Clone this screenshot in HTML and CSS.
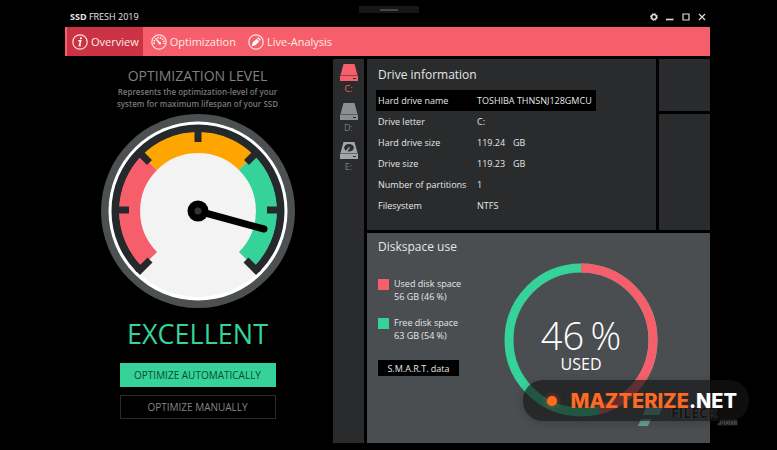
FILE: index.html
```html
<!DOCTYPE html>
<html lang="en">
<head>
    <meta charset="UTF-8">
    <meta name="viewport" content="width=device-width, initial-scale=1.0">
    <title>SSD Fresh 2019</title>
    <link rel="stylesheet" href="styles.css">
</head>
<body>
    <div class="handle"></div>
    <div class="app">
        <header class="titlebar">
            <h1 class="app-name"><b>SSD</b> FRESH 2019</h1>
            <div class="window-buttons">
                <button type="button" aria-label="Settings">
                    <svg width="8" height="8" viewBox="0 0 8 8"><circle cx="4" cy="4" r="2.5" fill="none" stroke="#ddd" stroke-width="1.7"/><circle cx="4" cy="4" r="3.4" fill="none" stroke="#ddd" stroke-width="1" stroke-dasharray="1.37 1.3"/></svg>
                </button>
                <button type="button" aria-label="Minimize">
                    <svg width="8" height="8" viewBox="0 0 8 8"><path d="M0 6.5h7.5" stroke="#ddd" stroke-width="1.6"/></svg>
                </button>
                <button type="button" aria-label="Maximize">
                    <svg width="8" height="8" viewBox="0 0 8 8"><path d="M1 1h6v6h-6z" fill="none" stroke="#ddd" stroke-width="1.2"/></svg>
                </button>
                <button type="button" aria-label="Close">
                    <svg width="8" height="8" viewBox="0 0 8 8"><path d="M1 1l6 6M7 1L1 7" stroke="#ddd" stroke-width="1.2"/></svg>
                </button>
            </div>
        </header>

        <nav class="tabs">
            <a href="#" class="tab active">
                <svg width="16" height="16" viewBox="0 0 16 16"><circle cx="8" cy="8" r="7.2" fill="none" stroke="#ffe3dd" stroke-width="1.2"/><circle cx="8.9" cy="4.3" r="1.1" fill="#fff"/><path d="M6.3 6.8h2.4L7.4 11.6h1.5" fill="none" stroke="#fff" stroke-width="1.5"/></svg>
                Overview
            </a>
            <a href="#" class="tab">
                <svg width="16" height="16" viewBox="0 0 16 16"><circle cx="8" cy="8" r="7.2" fill="none" stroke="#ffe3dd" stroke-width="1.2"/><path d="M3.2 10A5 5 0 1 1 12.8 10" fill="none" stroke="#ffe3dd" stroke-width="1.8" stroke-dasharray="1.6 .9"/><path d="M5.5 5.5L9 9.5" stroke="#fff" stroke-width="1.4"/><circle cx="8.8" cy="9.2" r="1.2" fill="#fff"/></svg>
                Optimization
            </a>
            <a href="#" class="tab">
                <svg width="16" height="16" viewBox="0 0 16 16"><circle cx="8" cy="8" r="7.2" fill="none" stroke="#ffe3dd" stroke-width="1.2"/><path d="M3.8 12.2l.9-3.6 3.9-3.9 2.7 2.7-3.9 3.9zM9.2 4.1l1-1 2.7 2.7-1 1z" fill="#fff"/></svg>
                Live-Analysis
            </a>
        </nav>

        <main class="content">
            <section class="level">
                <h2 class="level-title">OPTIMIZATION LEVEL</h2>
                <p class="level-text">Represents the optimization-level of your<br>system for maximum lifespan of your SSD</p>
                <svg class="gauge" width="194" height="194" viewBox="-97 -97 194 194">
                    <circle r="97" fill="#4d5051"/>
                    <circle r="89.500" fill="#fff"/>
                    <circle r="86" fill="#f3f3f3"/>
                    <g fill="none">
                        <path d="M-58.3 58.3A82.5 82.5 0 1 1 58.3 58.3" stroke="#26292b" stroke-width="8"/>
                        <path d="M-48.4 48.4A68.5 68.5 0 0 1 -48.4 -48.4" stroke="#f65e6b" stroke-width="21"/>
                        <path d="M-48.4 -48.4A68.5 68.5 0 0 1 48.4 -48.4" stroke="#ffa500" stroke-width="21"/>
                        <path d="M48.4 -48.4A68.5 68.5 0 0 1 48.4 48.4" stroke="#35d399" stroke-width="21"/>
                        <path d="M-85 -1h16M85 -1h-16M0 -85v16M-60 -60l11.5 11.5M60 -60l-11.5 11.5M-60.5 61.500l12.500 -12.500M60.500 61.500l-12.500 -12.500" stroke="#26292b" stroke-width="7"/>
                    </g>
                    <path d="M0 0L66 18" stroke="#000" stroke-width="7" stroke-linecap="round"/>
                    <circle r="10.5"/>
                    <circle r="3.5" fill="#333"/>
                </svg>
                <p class="level-result">EXCELLENT</p>
                <button type="button" class="action primary">OPTIMIZE AUTOMATICALLY</button>
                <button type="button" class="action">OPTIMIZE MANUALLY</button>
            </section>

            <aside class="drives">
                <button type="button" class="drive selected">
                    <svg width="18" height="17" viewBox="0 0 18 17"><path d="M3.5 0h11L17.5 11H.5zM0 11.500h18v5.500H0z" fill="currentColor"/><path d="M13 14.5h3" stroke="#292b2c"/></svg>
                    C:
                </button>
                <button type="button" class="drive">
                    <svg width="18" height="17" viewBox="0 0 18 17"><path d="M3.5 0h11L17.5 11H.5zM0 11.500h18v5.500H0z" fill="#8c8f90"/><path d="M13 14.5h3" stroke="#292b2c"/></svg>
                    D:
                </button>
                <button type="button" class="drive">
                    <svg width="18" height="17" viewBox="0 0 18 17"><path d="M3.5 0h11L17.5 11H.5zM0 11.500h18v5.500H0z" fill="#a3a6a7"/><ellipse cx="9" cy="5.8" rx="4.8" ry="3.8" fill="#292b2c"/><path d="M9 6L6 10" stroke="#a3a6a7" stroke-width="1.6"/><circle cx="9.3" cy="5.5" r="1" fill="#6d7071"/><path d="M13 14.5h3" stroke="#292b2c"/></svg>
                    E:
                </button>
            </aside>

            <div class="panels">
                <div class="panels-top">
                    <section class="panel info">
                        <h2 class="panel-title">Drive information</h2>
                        <table class="info-table">
                            <tr class="highlight"><th scope="row">Hard drive name</th><td colspan="2">TOSHIBA THNSNJ128GMCU</td></tr>
                            <tr><th scope="row">Drive letter</th><td colspan="2">C:</td></tr>
                            <tr><th scope="row">Hard drive size</th><td class="amount">119.24</td><td>GB</td></tr>
                            <tr><th scope="row">Drive size</th><td class="amount">119.23</td><td>GB</td></tr>
                            <tr><th scope="row">Number of partitions</th><td colspan="2">1</td></tr>
                            <tr><th scope="row">Filesystem</th><td colspan="2">NTFS</td></tr>
                        </table>
                    </section>
                    <div class="side">
                        <div class="panel side-small"></div>
                        <div class="panel side-large"></div>
                    </div>
                </div>
                <section class="panel usage">
                    <div class="usage-info">
                        <h2 class="panel-title">Diskspace use</h2>
                        <ul class="legend">
                            <li><span class="swatch used"></span><span>Used disk space<br>56 GB (46 %)</span></li>
                            <li><span class="swatch free"></span><span>Free disk space<br>63 GB (54 %)</span></li>
                        </ul>
                        <button type="button" class="smart">S.M.A.R.T. data</button>
                    </div>
                    <div class="donut">
                        <svg width="154" height="154" viewBox="-77 -77 154 154">
                            <g fill="none" stroke-width="9" transform="rotate(-90)">
                                <circle r="72" stroke="#35d399"/>
                                <circle r="72" stroke="#f65e6b" pathLength="100" stroke-dasharray="46 54"/>
                            </g>
                        </svg>
                        <div class="donut-label">
                            <span class="percent">46&thinsp;%</span>
                            <span class="caption">USED</span>
                        </div>
                    </div>
                </section>
            </div>
        </main>
    </div>

    <div class="source-mark">
        <svg width="26" height="20" viewBox="0 0 26 20"><path d="M8 0h17l-4 8H5z" fill="#5fae9a"/><path d="M3 12h10l-3 7H0z" fill="#6ba391"/></svg>
        <span class="source-name">FILECR<small>.com</small></span>
    </div>
    <div class="badge">
        <span class="badge-dot"></span>
        <span class="badge-text"><b>MAZTERIZE</b>.NET</span>
    </div>
</body>
</html>
```
FILE: styles.css
```css
* {
    box-sizing: border-box;
}
body {
    margin: 0;
    padding: 0 67px 7px 65px;
    background-color: #000;
    color: #e6e6e6;
    font-family: "Open Sans", "Noto Sans", sans-serif;
    font-size: 10px;
    min-height: 100vh;
    display: flex;
}
h1, h2, p, ul {
    margin: 0;
    padding: 0;
    font-weight: normal;
}
button {
    font-family: inherit;
    color: inherit;
    background: none;
    border: none;
    padding: 0;
    cursor: pointer;
}
svg {
    display: block;
    flex: none;
}
.app {
    flex: 1;
    display: flex;
    flex-direction: column;
}

/* title bar */
.handle {
    position: absolute;
    top: 6px;
    left: 50%;
    width: 60px;
    height: 7px;
    margin-left: -30px;
    background-color: #171717;
}
.handle::after {
    content: "";
    display: block;
    width: 18px;
    height: 2px;
    margin: 3px auto 0;
    background-color: #454545;
}
.titlebar {
    display: flex;
    justify-content: space-between;
    align-items: center;
    height: 27px;
    padding: 6px 4px 0 5px;
}
.app-name {
    font-size: 9px;
}
.window-buttons {
    display: flex;
    gap: 8px;
}

/* tabs */
.tabs {
    display: flex;
    gap: 3px;
    height: 29px;
    padding-left: 2px;
    background-color: #f65e6b;
}
.tab {
    display: flex;
    align-items: center;
    gap: 3px;
    padding: 0 4px 0 5px;
    color: #ffece8;
    font-size: 11px;
    text-decoration: none;
}
.tab.active {
    background-color: #cb3243;
}

.content {
    flex: 1;
    display: flex;
    gap: 3px;
}

/* optimization level */
.level {
    flex: 0 0 265px;
    display: flex;
    flex-direction: column;
    align-items: center;
    padding-top: 10px;
}
.level-title {
    color: #808080;
    font-size: 14px;
    line-height: 20px;
}
.level-text {
    color: #777;
    font-size: 8px;
    font-weight: 600;
    line-height: 12px;
    text-align: center;
}
.gauge {
    margin-top: 4px;
}
.level-result {
    margin: 6px 0 10px;
    color: #35d399;
    font-size: 27px;
    line-height: 39px;
}
.action {
    width: 156px;
    height: 24px;
    margin-bottom: 8px;
    border: 1px solid #2c2c2c;
    color: #858585;
    font-size: 10px;
}
.action.primary {
    background-color: #35d399;
    border-color: #35d399;
    color: #0c4a35;
}

/* drive list */
.drives {
    flex: 0 0 31px;
    display: flex;
    flex-direction: column;
    align-items: center;
    gap: 7px;
    margin-top: 3px;
    padding-top: 5px;
    background-color: #292b2c;
}
.drive {
    display: flex;
    flex-direction: column;
    align-items: center;
    gap: 1px;
    color: #7b7e7f;
    font-size: 9px;
    line-height: 14px;
}
.drive.selected {
    color: #f65e6b;
}

/* panels */
.panels {
    flex: 1;
    display: flex;
    flex-direction: column;
    gap: 3px;
    margin-top: 3px;
}
.panels-top {
    display: flex;
    gap: 3px;
}
.panel {
    background-color: #292b2c;
}
.panel-title {
    font-size: 12px;
    line-height: 16px;
}
.info {
    flex: 1;
    padding: 8px 9px 14px;
}
.info .panel-title {
    padding: 0 2px;
}
.info-table {
    margin-top: 7px;
    border-collapse: collapse;
    font-size: 9px;
}
.info-table th,
.info-table td {
    height: 21px;
    padding: 0 4px 0 0;
    font-weight: normal;
    text-align: left;
}
.info-table th {
    width: 101px;
    padding: 0 0 0 2px;
}
.info-table .amount {
    width: 36px;
}
.highlight {
    background-color: #000;
}
.side {
    flex: 0 0 51px;
    display: flex;
    flex-direction: column;
    gap: 3px;
}
.side-small {
    height: 52px;
}
.side-large {
    flex: 1;
}
.usage {
    flex: 1;
    display: flex;
    align-items: flex-start;
    gap: 43px;
    padding: 6px 11px 0;
    background-color: #4b4e50;
}
.usage-info {
    flex: 0 0 82px;
    white-space: nowrap;
}
.legend {
    display: flex;
    flex-direction: column;
    gap: 13px;
    margin: 22px 0 18px;
    list-style: none;
    font-size: 9px;
    line-height: 13px;
}
.legend li {
    display: flex;
    gap: 5px;
}
.swatch {
    flex: none;
    width: 11px;
    height: 11px;
    margin-top: 2px;
}
.used {
    background-color: #f65e6b;
}
.free {
    background-color: #35d399;
}
.smart {
    width: 81px;
    height: 16px;
    background-color: #000;
    font-size: 9px;
}
.donut {
    display: grid;
    place-items: center;
    margin-top: 24px;
}
.donut > * {
    grid-area: 1 / 1;
}
.donut-label {
    display: flex;
    flex-direction: column;
    align-items: center;
    padding-top: 10px;
    color: #fff;
}
.percent {
    font-size: 38px;
    font-weight: 300;
    line-height: 38px;
}
.caption {
    font-size: 16px;
    line-height: 20px;
}

/* overlays */
.source-mark {
    position: absolute;
    right: 40px;
    bottom: 23px;
    display: flex;
    gap: 7px;
}
.source-name {
    display: flex;
    flex-direction: column;
    width: 66px;
    color: #111;
    font-size: 14px;
    font-weight: 700;
    line-height: 11px;
    text-shadow: 0 0 1px #aaa, 0 0 1px #aaa;
}
.source-name small {
    font-size: 8px;
    line-height: 8px;
    text-align: right;
}
.badge {
    position: absolute;
    right: 28px;
    bottom: 29px;
    display: flex;
    align-items: center;
    justify-content: space-between;
    width: 226px;
    height: 41px;
    padding: 0 12px 0 24px;
    border-radius: 20px;
    background-color: rgba(22, 22, 22, 0.66);
    box-shadow: 0 2px 8px rgba(0, 0, 0, 0.2);
}
.badge-dot {
    width: 10px;
    height: 10px;
    border-radius: 50%;
    background-color: #ff6a22;
    box-shadow: 0 0 6px rgba(255, 106, 34, 0.6);
}
.badge-text {
    color: #fff;
    font-family: Inter, sans-serif;
    font-size: 20px;
    font-weight: 800;
    line-height: 20px;
}
.badge-text b {
    color: #ff6a22;
    font-weight: 800;
}
```
